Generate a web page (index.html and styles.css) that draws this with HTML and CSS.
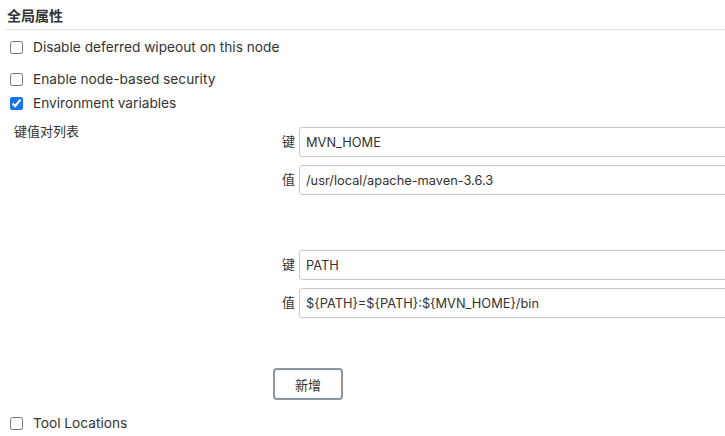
FILE: index.html
```html
<!DOCTYPE html>
<html lang="zh-CN">
<head>
  <meta charset="UTF-8">
  <title>全局属性</title>
  <link rel="stylesheet" href="styles.css">
</head>
<body>
  <div class="section">
    <div class="section-header">全局属性</div>

    <label class="check-row first">
      <input type="checkbox">
      <span>Disable deferred wipeout on this node</span>
    </label>

    <label class="check-row spaced">
      <input type="checkbox">
      <span>Enable node-based security</span>
    </label>

    <label class="check-row">
      <input type="checkbox" checked>
      <span>Environment variables</span>
    </label>

    <div class="env-block">
      <div class="env-title">键值对列表</div>
      <div class="env-list">
        <div class="kv-entry">
          <div class="kv-row">
            <span class="kv-label">键</span>
            <input class="kv-input" type="text" value="MVN_HOME">
          </div>
          <div class="kv-row">
            <span class="kv-label">值</span>
            <input class="kv-input" type="text" value="/usr/local/apache-maven-3.6.3">
          </div>
        </div>
        <div class="kv-entry">
          <div class="kv-row">
            <span class="kv-label">键</span>
            <input class="kv-input" type="text" value="PATH">
          </div>
          <div class="kv-row">
            <span class="kv-label">值</span>
            <input class="kv-input" type="text" value="${PATH}=${PATH}:${MVN_HOME}/bin">
          </div>
        </div>
        <button class="add-btn">新增</button>
      </div>
    </div>

    <label class="check-row last">
      <input type="checkbox">
      <span>Tool Locations</span>
    </label>
  </div>
</body>
</html>
```

FILE: styles.css
```css
* {
  box-sizing: border-box;
}

html, body {
  margin: 0;
  padding: 0;
  overflow: hidden;
}

body {
  font-family: Inter, "Noto Sans CJK SC", sans-serif;
  font-size: 13.7px;
  color: #333;
  background: #fff;
}

.section-header {
  margin-left: 6px;
  padding: 6px 0 3px 1px;
  line-height: 20px;
  font-size: 14px;
  font-weight: bold;
  border-bottom: 1px solid #ddd;
}

.check-row {
  display: flex;
  align-items: center;
  height: 24px;
  padding-left: 10px;
}

.check-row input {
  width: 13px;
  height: 13px;
  margin: 0 10px 0 0;
  accent-color: #1a73e8;
}

.check-row.first {
  margin-top: 5px;
}

.check-row.spaced {
  margin-top: 8px;
}

.check-row.last {
  margin-top: 11px;
}

.env-block {
  display: flex;
  margin-top: 2px;
}

.env-title {
  flex-shrink: 0;
  width: 273px;
  padding: 5px 0 0 14px;
  line-height: 18px;
  font-size: 13px;
}

.env-list {
  flex-shrink: 0;
  width: 480px;
  padding-top: 10px;
}

.kv-entry {
  display: flex;
  flex-direction: column;
  gap: 8px;
  padding-left: 9px;
  margin-bottom: 55px;
}

.kv-entry + .kv-entry {
  margin-bottom: 50px;
}

.kv-row {
  display: flex;
  align-items: flex-start;
}

.kv-label {
  flex-shrink: 0;
  width: 17px;
  padding-top: 4px;
  line-height: 20px;
  font-size: 13px;
}

.kv-input {
  flex-shrink: 0;
  width: 460px;
  height: 30px;
  padding: 0 6px;
  border: 1px solid #c8c8c8;
  border-radius: 3px;
  font-family: inherit;
  font-size: 12.8px;
  color: #333;
}

.add-btn {
  display: block;
  width: 70px;
  height: 32px;
  border: 2px solid #8a96a2;
  border-radius: 4px;
  background: #fff;
  font-family: inherit;
  font-size: 13px;
  color: #333;
}
```
